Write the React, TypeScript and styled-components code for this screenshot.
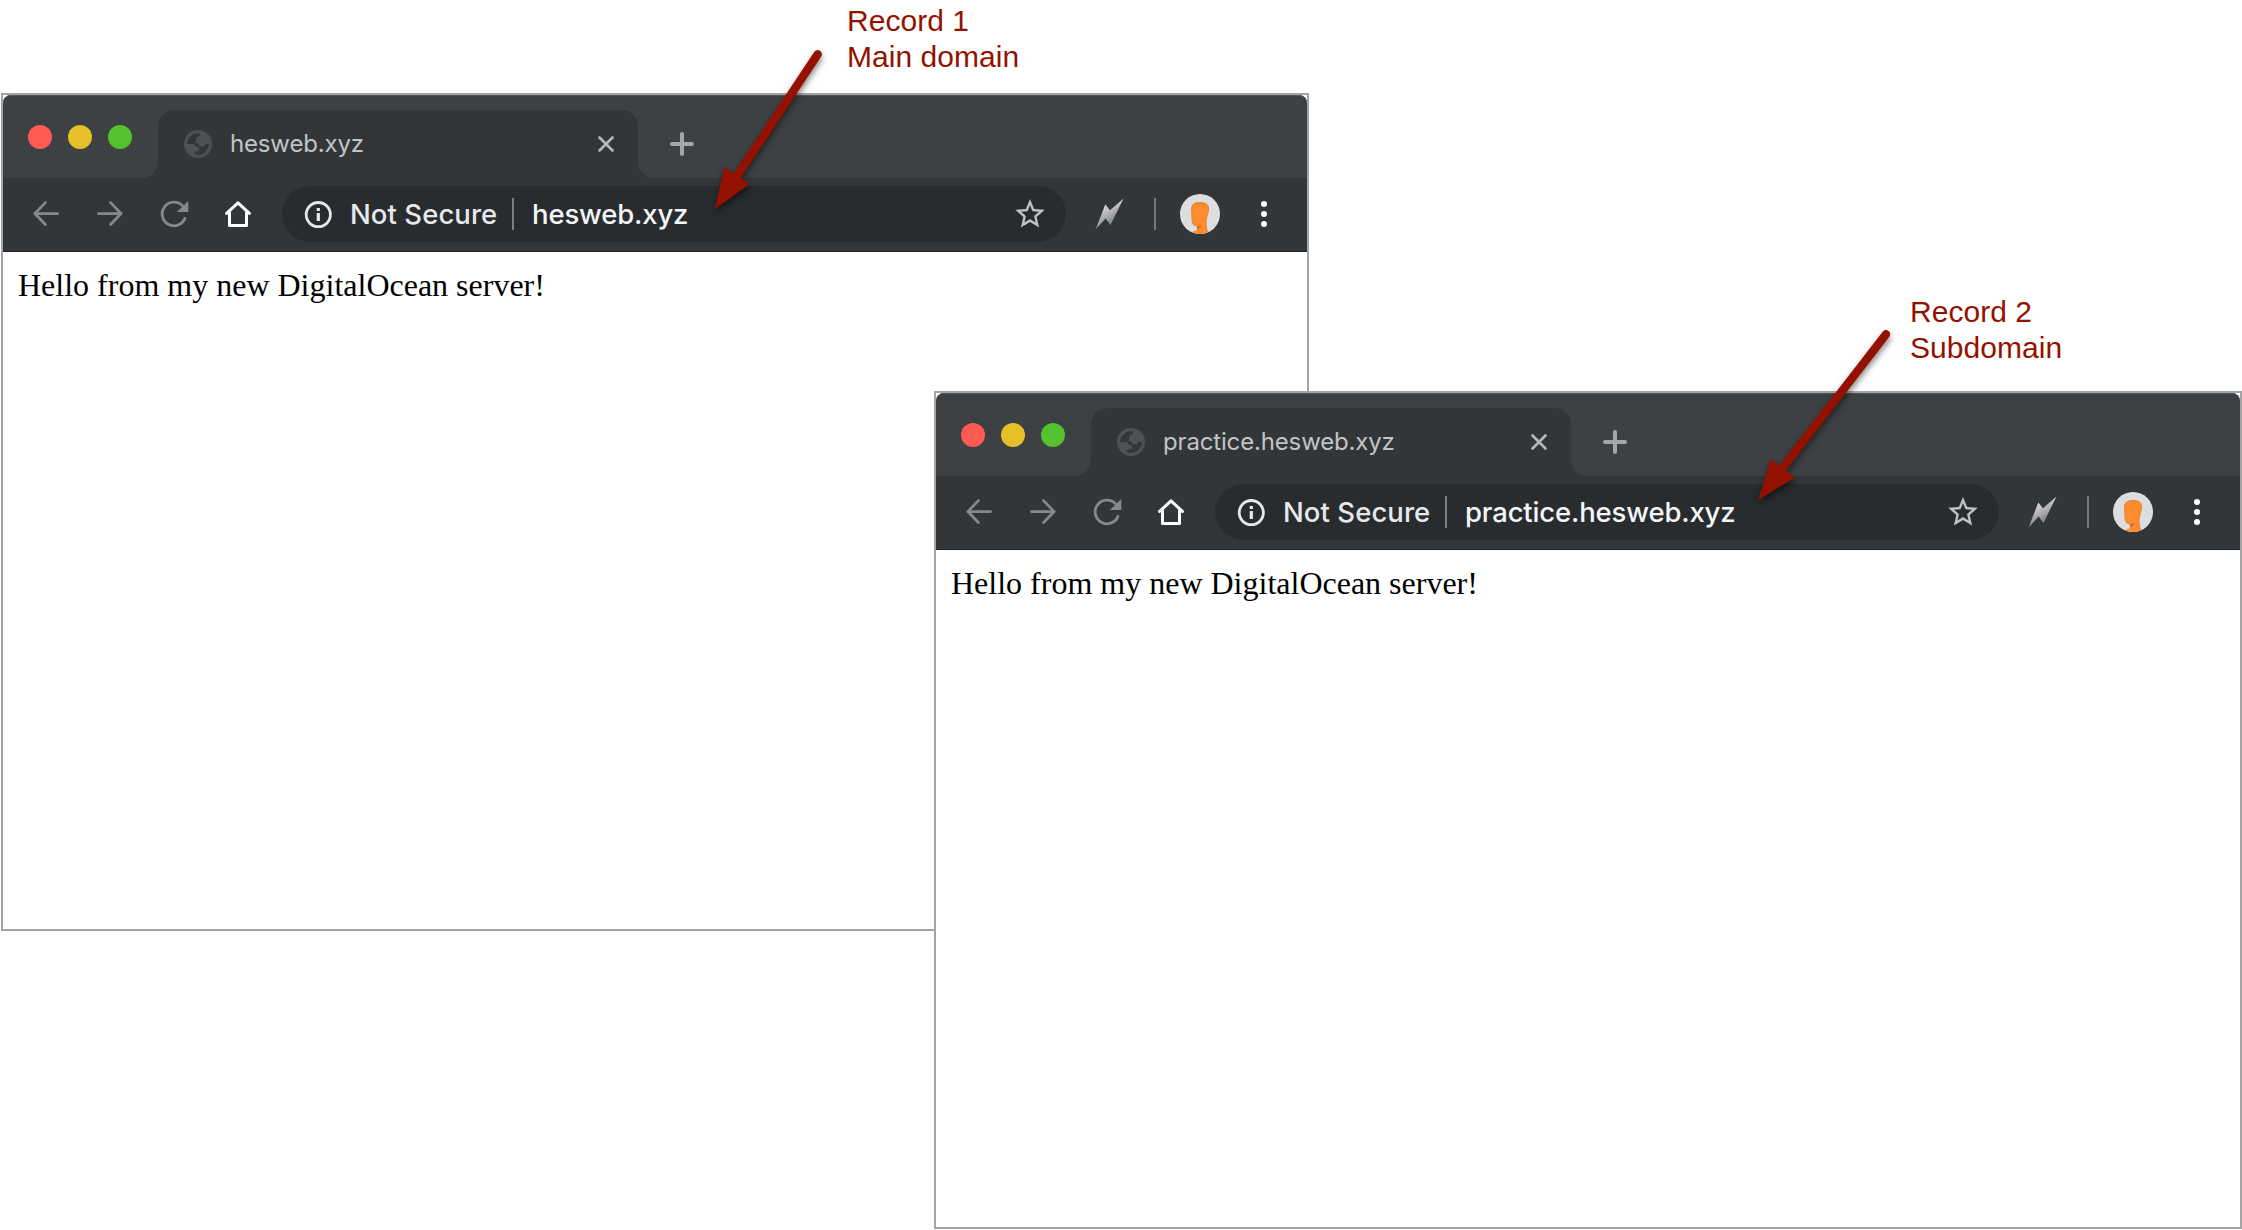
import React from "react";
import styled, { createGlobalStyle } from "styled-components";

const GlobalStyle = createGlobalStyle`
  *, *::before, *::after { box-sizing: border-box; }
  html, body { margin: 0; background: #fff; }
`;

const ui = `Inter, "Liberation Sans", sans-serif`;

const Canvas = styled.main`
  position: relative;
  width: 2242px;
  height: 1230px;
  overflow: hidden;
  background: #fff;
`;

const Window = styled.section<{ $x: number; $y: number }>`
  position: absolute;
  left: ${(p) => p.$x}px;
  top: ${(p) => p.$y}px;
  width: 1308px;
  height: 838px;
  display: flex;
  flex-direction: column;
  border: 2px solid #a4a4a4;
  background: #fff;
`;

const TabStrip = styled.header`
  display: flex;
  align-items: flex-start;
  height: 83px;
  padding-left: 25px;
  border-radius: 8px 8px 0 0;
  background: #3d4143;
  box-shadow: inset 0 1px 0 #515557;
`;

const Lights = styled.div`
  display: flex;
  gap: 16px;
  width: 130px;
  padding-top: 30px;
`;

const Light = styled.span<{ $color: string }>`
  width: 24px;
  height: 24px;
  border-radius: 50%;
  background: ${(p) => p.$color};
`;

const Tab = styled.div`
  position: relative;
  display: flex;
  align-items: center;
  width: 480px;
  height: 68px;
  margin-top: 15px;
  padding: 0 24px 0 26px;
  border-radius: 16px 16px 0 0;
  background: #323639;

  &::before,
  &::after {
    content: "";
    position: absolute;
    bottom: 0;
    width: 16px;
    height: 16px;
  }
  &::before {
    right: 100%;
    background: radial-gradient(circle at 0 0, transparent 15.5px, #323639 16px);
  }
  &::after {
    left: 100%;
    background: radial-gradient(circle at 100% 0, transparent 15.5px, #323639 16px);
  }
`;

const TabTitle = styled.span`
  flex: 1;
  margin-left: 18px;
  color: #c1c4c5;
  font: 400 24px/32px ${ui};
  letter-spacing: -0.16px;
`;

const NewTab = styled.div`
  display: flex;
  margin: 37px 0 0 32px;
`;

const Toolbar = styled.nav`
  display: flex;
  align-items: center;
  height: 74px;
  padding: 0 27px 1px;
  border-bottom: 1px solid #252326;
  background: #323639;
`;

const NavButtons = styled.div`
  display: flex;
  gap: 32px;
  margin-right: 28px;
`;

const Omnibox = styled.div`
  display: flex;
  align-items: center;
  width: 784px;
  height: 56px;
  padding: 0 20px 0 22px;
  border-radius: 28px;
  background: #282c2f;
  font: 500 27.5px/36px ${ui};
`;

const Security = styled.span`
  width: 148px;
  margin: 0 14px 0 18px;
  color: #e6e8ec;
  letter-spacing: 0.06px;
  white-space: nowrap;
`;

const Url = styled.span`
  flex: 1;
  margin-left: 18px;
  color: #f4f5f7;
  letter-spacing: -0.16px;
`;

const Divider = styled.span`
  width: 2px;
  height: 32px;
  background: #7b7f82;
`;

const Actions = styled.div`
  display: flex;
  align-items: center;
  margin-left: 28px;
`;

const ActionDivider = styled(Divider)`
  margin: 0 24px 0 28px;
  background: #75787b;
`;

const Menu = styled.div`
  display: flex;
  flex-direction: column;
  gap: 4px;
  margin-left: 41px;
`;

const Dot = styled.i`
  width: 6px;
  height: 6px;
  border-radius: 50%;
  background: #fff;
`;

const Page = styled.p`
  margin: 0;
  padding: 15px;
  color: #000;
  font: 32px/37px "Liberation Serif", "Times New Roman", serif;
`;

const Note = styled.div<{ $x: number; $y: number }>`
  position: absolute;
  left: ${(p) => p.$x}px;
  top: ${(p) => p.$y}px;
  color: #941100;
  font: 30px/36px "Liberation Sans", Helvetica, Arial, sans-serif;
  letter-spacing: 0.04px;
  white-space: pre;
`;

const Arrows = styled.svg`
  position: absolute;
  inset: 0;
  filter: drop-shadow(0 4px 3px rgba(0, 0, 0, 0.5));
`;

const Icon = styled.svg<{ $size?: number }>`
  display: block;
  flex: none;
  width: ${(p) => p.$size ?? 32}px;
  height: ${(p) => p.$size ?? 32}px;
  fill: none;
  overflow: visible;
`;

const Globe = () => (
  <Icon $size={28} viewBox="0 0 28 28">
    <circle cx="14" cy="14" r="14" fill="#4d5154" />
    <path
      fill="#323639"
      d="M3.2 14C3.2 8.2 7.4 4 13.4 3.3C14.8 3.3 16 3.8 16.2 4.6C16.2 6 14.8 6.6 13.2 7C12.2 7.3 12.4 8.6 12.9 9.6C12.2 10.2 11.4 10.8 11.4 11.7C11.4 13.4 13.6 13.1 14.7 14C15.2 15.2 15.8 16.4 17.4 16.6C19.4 16.8 20 15 21.4 14.2C22.6 13.6 24 14 24.8 14C24.8 20 20 24.8 14 24.8C12.6 24.8 11 24.5 10.2 24.1V21.4H13C15 21.4 15.6 20.2 15.3 18.6C15 17 13.2 16.8 12 16.3C11 15.8 10.8 14 9.6 14Z"
    />
  </Icon>
);

const Close = () => (
  <Icon $size={16} viewBox="0 0 16 16" stroke="#b6b9bb" strokeWidth="2.7" strokeLinecap="round">
    <path d="M1.5 1.5L14.5 14.5M14.5 1.5L1.5 14.5" />
  </Icon>
);

const Plus = () => (
  <Icon $size={24} viewBox="0 0 24 24" stroke="#a3a7aa" strokeWidth="4" strokeLinecap="round">
    <path d="M12 2V22M2 12H22" />
  </Icon>
);

const Back = () => (
  <Icon viewBox="0 0 32 32" stroke="#85898b" strokeWidth="2.8" strokeLinecap="round" strokeLinejoin="round">
    <path d="M15.4 4.6L4.8 15.6L15.4 26.4M4.8 15.6H27.6" />
  </Icon>
);

const Forward = () => (
  <Icon viewBox="0 0 32 32" stroke="#85898b" strokeWidth="2.8" strokeLinecap="round" strokeLinejoin="round">
    <path d="M16.6 4.6L27.2 15.6L16.6 26.4M27.2 15.6H4.4" />
  </Icon>
);

const Reload = () => (
  <Icon viewBox="0 0 32 32">
    <path d="M26.9 20.4A11.8 11.8 0 1 1 24.6 7.9" stroke="#85898b" strokeWidth="2.8" strokeLinecap="round" />
    <path d="M30.3 3V14H18.9Z" fill="#85898b" />
  </Icon>
);

const Home = () => (
  <Icon viewBox="0 0 32 32" stroke="#fff" strokeWidth="3" strokeLinejoin="round" strokeLinecap="round">
    <path d="M4.6 15.4L16 4.9L27.4 15.4M7.5 14.5V27.5H24.5V14.5" />
  </Icon>
);

const Info = () => (
  <Icon $size={28} viewBox="0 0 28 28">
    <circle cx="14.3" cy="14.6" r="12.1" stroke="#e6e8ec" strokeWidth="2.8" />
    <path d="M12.7 8H15.9V11H12.7ZM12.7 13H15.9V21H12.7Z" fill="#e6e8ec" />
  </Icon>
);

const Star = () => (
  <Icon viewBox="0 0 32 32">
    <path
      transform="translate(-1.64 -2) scale(1.47 1.5)"
      fill="#bfc3c6"
      d="M22 9.24l-7.19-.62L12 2 9.19 8.63 2 9.24l5.46 4.73L5.82 21 12 17.27 18.18 21l-1.63-7.03L22 9.24zM12 15.4l-3.76 2.27 1-4.28-3.32-2.88 4.38-.38L12 6.1l1.71 4.04 4.38.38-3.32 2.88 1 4.28L12 15.4z"
    />
  </Icon>
);

const Bolt = ({ id }: { id: string }) => (
  <Icon viewBox="0 0 32 32">
    <defs>
      <linearGradient id={id} x1="0.25" y1="0.1" x2="0.65" y2="0.9">
        <stop offset="0" stopColor="#f4f4f4" />
        <stop offset="0.45" stopColor="#b5b5b5" />
        <stop offset="1" stopColor="#777" />
      </linearGradient>
    </defs>
    <path d="M29.5 0.5L16.5 26.9L11.7 20.6L1.7 31.2L11.3 6.6L16 12.2Z" fill={`url(#${id})`} />
  </Icon>
);

const Avatar = ({ id }: { id: string }) => (
  <Icon $size={40} viewBox="0 0 40 40">
    <clipPath id={id}>
      <circle cx="20" cy="20" r="20" />
    </clipPath>
    <g clipPath={`url(#${id})`}>
      <rect width="40" height="40" fill="#dedede" />
      <path
        d="M11.6 15C11.6 10.5 14 8.6 20 8.6C26 8.6 28.6 10.6 28.6 14.8C28.6 20 26 23 26 28.2C26 32.4 26.4 36 28.4 38.6L24 41H15L12 38.4C14.8 37.6 17.3 37.4 17.4 35.4V32.2C14.6 32.2 12.4 30.4 12 26Z"
        fill="#ff8d2e"
        stroke="#d87a2a"
        strokeWidth="0.8"
      />
      <path d="M17.4 32.2C19.4 32.2 20.8 31.2 21.8 30.2C21.4 32.4 20 34 17.5 35.4Z" fill="#c96c1c" />
    </g>
  </Icon>
);

type BrowserProps = { id: string; host: string; x: number; y: number };

const Browser = ({ id, host, x, y }: BrowserProps) => (
  <Window $x={x} $y={y}>
    <TabStrip>
      <Lights>
        <Light $color="#ff5b52" />
        <Light $color="#e6c029" />
        <Light $color="#53c22c" />
      </Lights>
      <Tab>
        <Globe />
        <TabTitle>{host}</TabTitle>
        <Close />
      </Tab>
      <NewTab>
        <Plus />
      </NewTab>
    </TabStrip>
    <Toolbar>
      <NavButtons>
        <Back />
        <Forward />
        <Reload />
        <Home />
      </NavButtons>
      <Omnibox>
        <Info />
        <Security>Not Secure</Security>
        <Divider />
        <Url>{host}</Url>
        <Star />
      </Omnibox>
      <Actions>
        <Bolt id={`${id}-bolt`} />
        <ActionDivider />
        <Avatar id={`${id}-avatar`} />
        <Menu>
          <Dot />
          <Dot />
          <Dot />
        </Menu>
      </Actions>
    </Toolbar>
    <Page>Hello from my new DigitalOcean server!</Page>
  </Window>
);

export default function App() {
  return (
    <>
      <GlobalStyle />
      <Canvas>
        <Browser id="main" host="hesweb.xyz" x={1} y={93} />
        <Browser id="sub" host="practice.hesweb.xyz" x={934} y={391} />
        <Arrows width="2242" height="1230" viewBox="0 0 2242 1230">
          <g stroke="#941100" strokeWidth="8.4" strokeLinecap="round">
            <path d="M817.7 54.3L735 179" />
            <path d="M1886 334.2L1781 470" />
          </g>
          <g fill="#941100">
            <path d="M715 209L724.3 166.7L749.5 184Z" />
            <path d="M1758.2 500L1770.7 459L1794.8 477.4Z" />
          </g>
        </Arrows>
        <Note $x={847} $y={3}>{"Record 1\nMain domain"}</Note>
        <Note $x={1910} $y={294}>{"Record 2\nSubdomain"}</Note>
      </Canvas>
    </>
  );
}
